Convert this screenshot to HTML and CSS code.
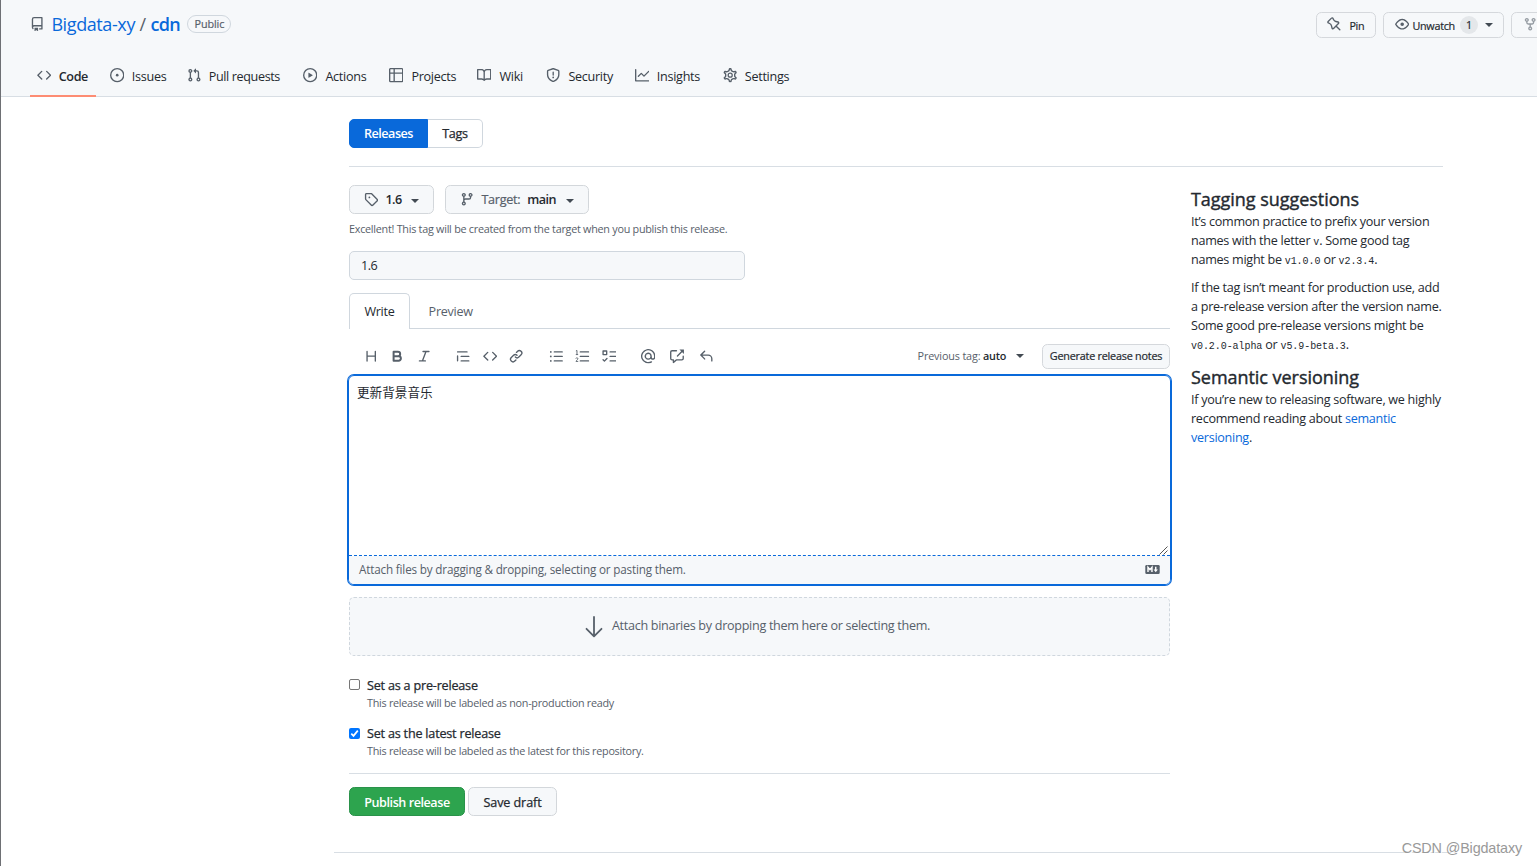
FILE: index.html
```html
<!DOCTYPE html>
<html lang="en">
<head>
    <meta charset="UTF-8">
    <meta name="viewport" content="width=device-width, initial-scale=1.0">
    <title>New release · Bigdata-xy/cdn</title>
    <link rel="stylesheet" href="styles.css">
</head>
<body>
    <svg class="sprite" width="0" height="0">
        <symbol id="repo" viewBox="0 0 16 16"><path fill-rule="evenodd" d="M2 2.5A2.5 2.5 0 014.5 0h8.75a.75.75 0 01.75.75v12.5a.75.75 0 01-.75.75h-2.5a.75.75 0 110-1.5h1.75v-2h-8a1 1 0 00-.714 1.7.75.75 0 01-1.072 1.05A2.495 2.495 0 012 11.5v-9zm10.5-1V9h-8c-.356 0-.694.074-1 .208V2.5a1 1 0 011-1h8zM5 12.25v3.25a.25.25 0 00.4.2l1.45-1.087a.25.25 0 01.3 0L8.6 15.7a.25.25 0 00.4-.2v-3.25a.25.25 0 00-.25-.25h-3.5a.25.25 0 00-.25.25z"/></symbol>
        <symbol id="code" viewBox="0 0 16 16"><path d="M4.72 3.22a.75.75 0 011.06 1.06L2.06 8l3.72 3.72a.75.75 0 11-1.06 1.06L.47 8.53a.75.75 0 010-1.06l4.25-4.25zm6.56 0a.75.75 0 10-1.06 1.06L13.94 8l-3.72 3.72a.75.75 0 101.06 1.06l4.25-4.25a.75.75 0 000-1.06l-4.25-4.25z"/></symbol>
        <symbol id="issue" viewBox="0 0 16 16"><path d="M8 9.5a1.5 1.5 0 100-3 1.5 1.5 0 000 3z"/><path fill-rule="evenodd" d="M8 0a8 8 0 100 16A8 8 0 008 0zM1.5 8a6.5 6.5 0 1113 0 6.5 6.5 0 01-13 0z"/></symbol>
        <symbol id="pull" viewBox="0 0 16 16"><path fill-rule="evenodd" d="M7.177 3.073L9.573.677A.25.25 0 0110 .854v4.792a.25.25 0 01-.427.177L7.177 3.427a.25.25 0 010-.354zM3.75 2.5a.75.75 0 100 1.5.75.75 0 000-1.5zm-2.25.75a2.25 2.25 0 113 2.122v5.256a2.251 2.251 0 11-1.5 0V5.372A2.25 2.25 0 011.5 3.25zM11 2.5h-1V4h1a1 1 0 011 1v5.628a2.251 2.251 0 101.5 0V5A2.5 2.5 0 0011 2.5zm1 10.25a.75.75 0 111.5 0 .75.75 0 01-1.5 0zM3.75 12a.75.75 0 100 1.5.75.75 0 000-1.5z"/></symbol>
        <symbol id="play" viewBox="0 0 16 16"><path fill-rule="evenodd" d="M1.5 8a6.5 6.5 0 1113 0 6.5 6.5 0 01-13 0zM8 0a8 8 0 100 16A8 8 0 008 0zM6.379 5.227A.25.25 0 006 5.442v5.117a.25.25 0 00.379.214l4.264-2.559a.25.25 0 000-.428L6.379 5.227z"/></symbol>
        <symbol id="table" viewBox="0 0 16 16"><path fill-rule="evenodd" d="M0 1.75C0 .784.784 0 1.75 0h12.5C15.216 0 16 .784 16 1.75v12.5A1.75 1.75 0 0114.25 16H1.75A1.75 1.75 0 010 14.25V1.75zM1.5 6.5v7.75c0 .138.112.25.25.25H5v-8H1.5zM5 5H1.5V1.75a.25.25 0 01.25-.25H5V5zm1.5 1.5v8h7.75a.25.25 0 00.25-.25V6.5h-8zm8-1.5h-8V1.5h7.75a.25.25 0 01.25.25V5z"/></symbol>
        <symbol id="book" viewBox="0 0 16 16"><path fill-rule="evenodd" d="M0 1.75A.75.75 0 01.75 1h4.253c1.227 0 2.317.59 3 1.501A3.744 3.744 0 0111.006 1h4.245a.75.75 0 01.75.75v10.5a.75.75 0 01-.75.75h-4.507a2.25 2.25 0 00-1.591.659l-.622.621a.75.75 0 01-1.06 0l-.622-.621A2.25 2.25 0 005.258 13H.75a.75.75 0 01-.75-.75V1.75zm8.755 3a2.25 2.25 0 012.25-2.25H14.5v9h-3.757c-.71 0-1.4.201-1.992.572l.004-7.322zm-1.504 7.324l.004-5.073-.002-2.253A2.25 2.25 0 005.003 2.5H1.5v9h3.757a3.75 3.75 0 011.994.574z"/></symbol>
        <symbol id="shield" viewBox="0 0 16 16"><path fill-rule="evenodd" d="M7.467.133a1.75 1.75 0 011.066 0l5.25 1.68A1.75 1.75 0 0115 3.48V7c0 1.566-.32 3.182-1.303 4.682-.983 1.498-2.585 2.813-5.032 3.855a1.7 1.7 0 01-1.33 0c-2.447-1.042-4.049-2.357-5.032-3.855C1.32 10.182 1 8.566 1 7V3.48a1.75 1.75 0 011.217-1.667l5.25-1.68zm.61 1.429a.25.25 0 00-.153 0l-5.25 1.68a.25.25 0 00-.174.238V7c0 1.358.275 2.666 1.057 3.86.784 1.194 2.121 2.34 4.366 3.297a.2.2 0 00.154 0c2.245-.956 3.582-2.104 4.366-3.298C13.225 9.666 13.5 8.36 13.5 7V3.48a.25.25 0 00-.174-.237l-5.25-1.68zM9 10.5a1 1 0 11-2 0 1 1 0 012 0zm-.25-5.75a.75.75 0 10-1.5 0v3a.75.75 0 001.5 0v-3z"/></symbol>
        <symbol id="graph" viewBox="0 0 16 16"><path d="M1.5 1.75a.75.75 0 00-1.5 0v12.5c0 .414.336.75.75.75h14.5a.75.75 0 000-1.5H1.5V1.75zm14.28 2.53a.75.75 0 00-1.06-1.06L10 7.94 7.53 5.47a.75.75 0 00-1.06 0L3.22 8.72a.75.75 0 001.06 1.06L7 7.06l2.47 2.47a.75.75 0 001.06 0l5.25-5.25z"/></symbol>
        <symbol id="gear" viewBox="0 0 16 16"><g fill="none" stroke="currentColor" stroke-width="1.4"><path transform="translate(-.88 -.88) scale(1.11)" d="M7.429 1.525a6.593 6.593 0 011.142 0c.036.003.108.036.137.146l.289 1.105c.147.56.55.967.997 1.189.174.086.341.183.501.29.417.278.97.423 1.53.27l1.102-.303c.11-.03.175.016.195.046.219.31.41.641.573.989.014.031.022.11-.059.19l-.815.806c-.411.406-.562.957-.53 1.456a4.588 4.588 0 010 .582c-.032.499.119 1.05.53 1.456l.815.806c.08.08.073.159.059.19a6.494 6.494 0 01-.573.99c-.02.029-.086.074-.195.045l-1.103-.303c-.559-.153-1.112-.008-1.529.27-.16.107-.327.204-.5.29-.449.222-.851.628-.998 1.189l-.289 1.105c-.029.11-.101.143-.137.146a6.613 6.613 0 01-1.142 0c-.036-.003-.108-.037-.137-.146l-.289-1.105c-.147-.56-.55-.967-.997-1.189a4.502 4.502 0 01-.501-.29c-.417-.278-.97-.423-1.53-.27l-1.102.303c-.11.03-.175-.016-.195-.046a6.492 6.492 0 01-.573-.989c-.014-.031-.022-.11.059-.19l.815-.806c.411-.406.562-.957.53-1.456a4.587 4.587 0 010-.582c.032-.499-.119-1.05-.53-1.456l-.815-.806c-.08-.08-.073-.159-.059-.19a6.44 6.44 0 01.573-.99c.02-.029.086-.075.195-.045l1.103.303c.559.153 1.112.008 1.529-.27.16-.107.327-.204.5-.29.449-.222.851-.628.998-1.189l.289-1.105c.029-.11.101-.143.137-.146z"/><circle cx="8" cy="8" r="2.25"/></g></symbol>
        <symbol id="pin" viewBox="0 0 16 16"><path fill-rule="evenodd" d="M4.456.734a1.75 1.75 0 012.826.504l.613 1.327a3.081 3.081 0 002.084 1.707l2.454.584c1.332.317 1.8 1.972.832 2.94L11.06 10l3.72 3.72a.75.75 0 11-1.061 1.06L10 11.06l-2.204 2.205c-.968.968-2.623.5-2.94-.832l-.584-2.454a3.081 3.081 0 00-1.707-2.084l-1.327-.613a1.75 1.75 0 01-.504-2.826L4.456.734zM5.92 1.866a.25.25 0 00-.404-.072L1.794 5.516a.25.25 0 00.072.404l1.328.613A4.582 4.582 0 015.73 9.63l.584 2.454a.25.25 0 00.42.12l5.47-5.47a.25.25 0 00-.12-.42L9.63 5.73a4.581 4.581 0 01-3.098-2.537L5.92 1.866z"/></symbol>
        <symbol id="eye" viewBox="0 0 16 16"><path fill-rule="evenodd" d="M1.679 7.932c.412-.621 1.242-1.75 2.366-2.717C5.175 4.242 6.527 3.5 8 3.5c1.473 0 2.824.742 3.955 1.715 1.124.967 1.954 2.096 2.366 2.717a.119.119 0 010 .136c-.412.621-1.242 1.75-2.366 2.717C10.825 11.758 9.473 12.5 8 12.5c-1.473 0-2.824-.742-3.955-1.715C2.92 9.818 2.09 8.69 1.679 8.068a.119.119 0 010-.136zM8 2c-1.981 0-3.67.992-4.933 2.078C1.797 5.169.88 6.423.43 7.1a1.619 1.619 0 000 1.798c.45.678 1.367 1.932 2.637 3.024C4.329 13.008 6.019 14 8 14c1.981 0 3.67-.992 4.933-2.078 1.27-1.091 2.187-2.345 2.637-3.023a1.619 1.619 0 000-1.798c-.45-.678-1.367-1.932-2.637-3.023C11.671 2.992 9.981 2 8 2zm0 8a2 2 0 100-4 2 2 0 000 4z"/></symbol>
        <symbol id="fork" viewBox="0 0 16 16"><path fill-rule="evenodd" d="M5 3.25a.75.75 0 11-1.5 0 .75.75 0 011.5 0zm0 2.122a2.25 2.25 0 10-1.5 0v.878A2.25 2.25 0 005.75 8.5h1.5v2.128a2.251 2.251 0 101.5 0V8.5h1.5a2.25 2.25 0 002.25-2.25v-.878a2.25 2.25 0 10-1.5 0v.878a.75.75 0 01-.75.75h-4.5A.75.75 0 015 6.25v-.878zm3.75 7.378a.75.75 0 11-1.5 0 .75.75 0 011.5 0zm3-8.75a.75.75 0 100-1.5.75.75 0 000 1.5z"/></symbol>
        <symbol id="branch" viewBox="0 0 16 16"><path fill-rule="evenodd" d="M11.75 2.5a.75.75 0 100 1.5.75.75 0 000-1.5zm-2.25.75a2.25 2.25 0 113 2.122V6A2.5 2.5 0 0110 8.5H6a1 1 0 00-1 1v1.128a2.251 2.251 0 11-1.5 0V5.372a2.25 2.25 0 111.5 0v1.836A2.492 2.492 0 016 7h4a1 1 0 001-1v-.628A2.25 2.25 0 019.5 3.25zM4.25 12a.75.75 0 100 1.5.75.75 0 000-1.5zM3.5 3.25a.75.75 0 111.5 0 .75.75 0 01-1.5 0z"/></symbol>
        <symbol id="tag" viewBox="0 0 16 16"><path fill-rule="evenodd" d="M2.5 7.775V2.75a.25.25 0 01.25-.25h5.025a.25.25 0 01.177.073l6.25 6.25a.25.25 0 010 .354l-5.025 5.025a.25.25 0 01-.354 0l-6.25-6.25a.25.25 0 01-.073-.177zm-1.5 0V2.75C1 1.784 1.784 1 2.75 1h5.025c.464 0 .91.184 1.238.513l6.25 6.25a1.75 1.75 0 010 2.474l-5.026 5.026a1.75 1.75 0 01-2.474 0l-6.25-6.25A1.75 1.75 0 011 7.775zM6 5a1 1 0 100 2 1 1 0 000-2z"/></symbol>
        <symbol id="heading" viewBox="0 0 16 16"><path fill="none" stroke="currentColor" stroke-width="1.5" stroke-linecap="round" d="M3.4 2.7v10.6M12.600 2.7v10.6M3.400 8h9.200"/></symbol>
        <symbol id="bold" viewBox="0 0 16 16"><path fill="none" stroke="currentColor" stroke-width="2.2" stroke-linejoin="round" d="M4 3h4.800a2.400 2.400 0 010 5H4zM4 8h5.600a2.500 2.500 0 010 5H4z"/></symbol>
        <symbol id="italic" viewBox="0 0 16 16"><path fill="none" stroke="currentColor" stroke-width="1.5" stroke-linecap="round" d="M6.7 2.75h6.6M2.7 13.25h6.6M10 2.75l-4 10.5"/></symbol>
        <symbol id="quote" viewBox="0 0 16 16"><path fill="none" stroke="currentColor" stroke-width="1.5" stroke-linecap="round" d="M1.75 3.25h10.5M5.75 8.25h8.5M5.75 13.25h8.5M1.75 7.7v5.5"/></symbol>
        <symbol id="link" viewBox="0 0 16 16"><path d="M7.775 3.275a.75.75 0 001.06 1.06l1.25-1.25a2 2 0 112.83 2.83l-2.5 2.5a2 2 0 01-2.83 0 .75.75 0 00-1.06 1.06 3.5 3.5 0 004.95 0l2.5-2.5a3.5 3.5 0 00-4.95-4.95l-1.25 1.25zm-4.69 9.64a2 2 0 010-2.83l2.5-2.5a2 2 0 012.83 0 .75.75 0 001.06-1.06 3.5 3.5 0 00-4.95 0l-2.5 2.5a3.5 3.5 0 004.95 4.95l1.25-1.25a.75.75 0 00-1.06-1.06l-1.25 1.25a2 2 0 01-2.83 0z"/></symbol>
        <symbol id="ul" viewBox="0 0 16 16"><path fill="none" stroke="currentColor" stroke-width="1.5" stroke-linecap="round" d="M5.9 3.25h8.8M5.9 8.25h8.8M5.9 13.25h8.8"/><circle cx="2" cy="3.25" r="1"/><circle cx="2" cy="8.25" r="1"/><circle cx="2" cy="13.25" r="1"/></symbol>
        <symbol id="ol" viewBox="0 0 16 16"><path fill="none" stroke="currentColor" stroke-width="1.5" stroke-linecap="round" d="M5.9 3.25h9.2M5.9 8.25h9.2M5.9 13.25h9.2"/><path fill="none" stroke="currentColor" d="M1 2.2l1.2-.6v4.6M.9 6.2h2.6M.9 10.6c.3-1.2 2.4-1.1 2.3.2 0 1-1.6 1.6-2.1 3h2.5"/></symbol>
        <symbol id="tasks" viewBox="0 0 16 16"><path fill="none" stroke="currentColor" stroke-width="1.5" stroke-linecap="round" stroke-linejoin="round" d="M1.2 2.2h4v4h-4zM9 3.25h6.2M9 8.25h6.2M9 13.25h6.2M1.2 12l1.5 1.5 2.8-3"/></symbol>
        <symbol id="mention" viewBox="0 0 16 16"><path fill-rule="evenodd" d="M4.75 2.37a6.5 6.5 0 006.5 11.26.75.75 0 01.75 1.298 8 8 0 113.994-7.273.754.754 0 01.006.095v1.5a2.75 2.75 0 01-5.072 1.475A4 4 0 1112 8v1.25a1.25 1.25 0 002.5 0V7.867a6.5 6.5 0 00-9.75-5.496V2.37zM10.5 8a2.5 2.5 0 10-5 0 2.5 2.5 0 005 0z"/></symbol>
        <symbol id="xref" viewBox="0 0 16 16"><path fill="none" stroke="currentColor" stroke-width="1.5" stroke-linecap="round" stroke-linejoin="round" d="M7.2 1.9H2.3c-.8 0-1.5.6-1.5 1.4v7.4c0 .8.7 1.4 1.5 1.4h1.5v3L7 12.1h6.2c.8 0 1.5-.6 1.5-1.4V8M8.3 7.7L14 2"/><path d="M10.5.5h4.6c.2 0 .4.2.4.4v4.6z"/></symbol>
        <symbol id="reply" viewBox="0 0 16 16"><path d="M6.78 1.97a.75.75 0 010 1.06L3.81 6h6.44A4.75 4.75 0 0115 10.75v2.5a.75.75 0 01-1.5 0v-2.5a3.25 3.25 0 00-3.25-3.25H3.81l2.97 2.97a.75.75 0 11-1.06 1.06L1.47 7.28a.75.75 0 010-1.06l4.25-4.25a.75.75 0 011.06 0z"/></symbol>
    </svg>

    <header class="header">
        <div class="topbar">
            <svg class="icon"><use href="#repo"/></svg>
            <a class="owner">Bigdata-xy</a>
            <span class="slash">/</span>
            <a class="repo">cdn</a>
            <span class="label">Public</span>
            <div class="actions">
                <button class="btn-sm pin"><svg class="icon"><use href="#pin"/></svg>Pin</button>
                <button class="btn-sm watch"><svg class="icon"><use href="#eye"/></svg>Unwatch<span class="counter">1</span><i class="caret"></i></button>
                <button class="btn-sm fork"><svg class="icon"><use href="#fork"/></svg></button>
            </div>
        </div>
        <nav class="nav">
            <a class="active"><svg class="icon"><use href="#code"/></svg>Code</a>
            <a><svg class="icon"><use href="#issue"/></svg>Issues</a>
            <a><svg class="icon"><use href="#pull"/></svg>Pull requests</a>
            <a><svg class="icon"><use href="#play"/></svg>Actions</a>
            <a><svg class="icon"><use href="#table"/></svg>Projects</a>
            <a><svg class="icon"><use href="#book"/></svg>Wiki</a>
            <a><svg class="icon"><use href="#shield"/></svg>Security</a>
            <a><svg class="icon"><use href="#graph"/></svg>Insights</a>
            <a><svg class="icon"><use href="#gear"/></svg>Settings</a>
        </nav>
    </header>

    <main class="container">
        <div class="subnav">
            <a class="selected">Releases</a><a class="tags">Tags</a>
        </div>
        <div class="columns">
            <div class="form">
                <div class="pickers">
                    <button class="btn tag"><svg class="icon"><use href="#tag"/></svg><b>1.6</b><i class="caret"></i></button>
                    <button class="btn target"><svg class="icon"><use href="#branch"/></svg><span>Target:</span><b>main</b><i class="caret"></i></button>
                </div>
                <p class="note">Excellent! This tag will be created from the target when you publish this release.</p>
                <div class="title-input">1.6</div>
                <div class="tabs">
                    <a class="tab current">Write</a>
                    <a class="tab">Preview</a>
                </div>
                <div class="toolbar">
                    <div class="tools">
                        <svg class="icon"><use href="#heading"/></svg>
                        <svg class="icon"><use href="#bold"/></svg>
                        <svg class="icon"><use href="#italic"/></svg>
                    </div>
                    <div class="tools">
                        <svg class="icon"><use href="#quote"/></svg>
                        <svg class="icon"><use href="#code"/></svg>
                        <svg class="icon"><use href="#link"/></svg>
                    </div>
                    <div class="tools">
                        <svg class="icon"><use href="#ul"/></svg>
                        <svg class="icon"><use href="#ol"/></svg>
                        <svg class="icon"><use href="#tasks"/></svg>
                    </div>
                    <div class="tools wide">
                        <svg class="icon"><use href="#mention"/></svg>
                        <svg class="icon"><use href="#xref"/></svg>
                        <svg class="icon"><use href="#reply"/></svg>
                    </div>
                    <div class="previous">Previous tag: <b>auto</b><i class="caret"></i></div>
                    <button class="btn-sm generate">Generate release notes</button>
                </div>
                <div class="editor">
                    <div class="text">更新背景音乐
                        <svg class="grip" viewBox="0 0 9 9"><path d="M.5 8.5l8-8M4.5 8.5l4-4" fill="none" stroke="#555" stroke-width="1"/></svg>
                    </div>
                    <div class="attach">
                        <span>Attach files by dragging &amp; dropping, selecting or pasting them.</span>
                        <svg class="markdown" viewBox="0 0 16 10"><rect width="16" height="10" rx="1.4" fill="#57606a"/><path d="M3 7.8V2.6l2.2 2.6 2.2-2.6v5.2" fill="none" stroke="#fff" stroke-width="1.6"/><path d="M11.6 2v4" stroke="#fff" stroke-width="1.6"/><path d="M9.2 5h4.8l-2.4 3z" fill="#fff"/></svg>
                    </div>
                </div>
                <div class="binaries">
                    <svg class="arrow" viewBox="0 0 18 22"><path d="M9 1v19M1.5 12.8L9 20.3l7.5-7.5" fill="none" stroke="currentColor" stroke-width="1.8" stroke-linecap="round" stroke-linejoin="round"/></svg>
                    <span>Attach binaries by dropping them here or selecting them.</span>
                </div>
                <div class="option">
                    <span class="check"></span>
                    <div>
                        <p class="name">Set as a pre-release</p>
                        <p class="hint">This release will be labeled as non-production ready</p>
                    </div>
                </div>
                <div class="option">
                    <span class="check on"><svg viewBox="0 0 11 11"><path d="M2.3 5.7l2.2 2.2 4.3-5.3" fill="none" stroke="#fff" stroke-width="1.7"/></svg></span>
                    <div>
                        <p class="name">Set as the latest release</p>
                        <p class="hint">This release will be labeled as the latest for this repository.</p>
                    </div>
                </div>
                <div class="submit">
                    <button class="btn publish">Publish release</button>
                    <button class="btn draft">Save draft</button>
                </div>
            </div>
            <aside class="sidebar">
                <h4>Tagging suggestions</h4>
                <p>It’s common practice to prefix your version<br>names with the letter <code>v</code>. Some good tag<br>names might be <code>v1.0.0</code> or <code>v2.3.4</code>.</p>
                <p>If the tag isn’t meant for production use, add<br>a pre-release version after the version name.<br>Some good pre-release versions might be<br><code>v0.2.0-alpha</code> or <code>v5.9-beta.3</code>.</p>
                <h4>Semantic versioning</h4>
                <p>If you’re new to releasing software, we highly<br>recommend reading about <a>semantic<br>versioning</a>.</p>
            </aside>
        </div>
    </main>
    <footer class="footer"></footer>
    <div class="watermark">CSDN @Bigdataxy</div>
</body>
</html>
```
FILE: styles.css
```css
*{
    box-sizing: border-box;
}
body{
    margin: 0;
    height: 866px;
    overflow: hidden;
    position: relative;
    border-left: 1px solid #6e7074;
    background: #fff;
    color: #24292f;
    font-family: "Open Sans", "Noto Sans CJK SC", sans-serif;
    font-size: 12.6px;
    line-height: 19px;
    letter-spacing: -0.28px;
    white-space: nowrap;
}
p,h4{
    margin: 0;
}
b{
    font-weight: 600;
}
button{
    font: inherit;
    letter-spacing: inherit;
    color: inherit;
    white-space: nowrap;
}
.sprite{
    position: absolute;
}
.icon{
    width: 14.4px;
    height: 14.4px;
    flex: none;
    fill: currentColor;
    color: #57606a;
}
.caret{
    border: 4px solid transparent;
    border-top-color: #424a53;
    border-bottom: 0;
}

/* header */
.header{
    height: 97px;
    background: #f6f8fa;
    border-bottom: 1px solid #d8dee4;
}
.topbar{
    display: flex;
    align-items: center;
    height: 48px;
    padding-left: 29px;
    font-size: 18px;
}
.owner,.repo{
    color: #0969da;
    letter-spacing: -0.4px;
}
.owner{
    margin-left: 7px;
    width: 88px;
}
.slash{
    width: 11px;
    color: #57606a;
}
.repo{
    width: 37px;
    font-weight: 600;
    letter-spacing: -0.7px;
}
.label{
    width: 44px;
    height: 18px;
    border: 1px solid #d0d7de;
    border-radius: 9px;
    color: #57606a;
    font-size: 10.8px;
    line-height: 15px;
    text-align: center;
    letter-spacing: -0.1px;
    -webkit-text-stroke: 0.2px;
}
.actions{
    display: flex;
    gap: 7px;
    margin-left: auto;
    margin-right: -40px;
    padding-top: 2px;
}
.btn-sm{
    display: flex;
    align-items: center;
    height: 26px;
    padding: 0 10px;
    border: 1px solid #d5d8dc;
    border-radius: 5.4px;
    background: #f6f8fa;
    font-size: 10.8px;
    -webkit-text-stroke: 0.2px;
}
.pin{
    width: 60px;
    gap: 8px;
}
.pin .icon,.watch .icon{
    margin-bottom: 2px;
}
.watch{
    width: 121px;
    padding-left: 11px;
}
.watch .icon{
    margin-right: 3px;
}
.counter{
    width: 18px;
    height: 18px;
    margin: 0 7px 0 5px;
    border-radius: 9px;
    background: #e4e7ea;
    line-height: 18px;
    text-align: center;
}
.fork{
    width: 66px;
    padding-left: 11px;
}
.fork .icon{
    opacity: .6;
    margin-bottom: 2px;
}
.nav{
    display: flex;
    height: 49px;
    padding-left: 29px;
    padding-top: 6px;
}
.nav a{
    display: flex;
    align-items: center;
    gap: 7.4px;
    height: 43px;
    padding-left: 7px;
    padding-top: 2px;
}
.nav .icon{
    margin-bottom: 2px;
}
.nav .active{
    width: 66px;
    margin-right: 7px;
    border-bottom: 2px solid #fd8c73;
    padding-top: 4px;
    font-weight: 600;
    letter-spacing: -0.4px;
}
.nav a:nth-child(2){ width: 78px; }
.nav a:nth-child(3){ width: 115px; padding-left: 6px; letter-spacing: -0.38px; }
.nav a:nth-child(4){ width: 86px; gap: 8px; }
.nav a:nth-child(5){ width: 88px; gap: 8px; }
.nav a:nth-child(6){ width: 69px; gap: 8px; }
.nav a:nth-child(7){ width: 89px; gap: 8px; }
.nav a:nth-child(8){ width: 88px; }

/* releases page */
.container{
    width: 1094px;
    margin-left: 348px;
    padding-top: 22px;
}
.subnav{
    display: flex;
    height: 48px;
    border-bottom: 1px solid #d8dee4;
    line-height: 27px;
    text-align: center;
}
.subnav a{
    height: 29px;
}
.selected{
    width: 79px;
    border: 1px solid #0969da;
    border-radius: 5px 0 0 5px;
    background: #0969da;
    color: #fff;
    font-weight: 600;
    letter-spacing: -0.5px;
}
.tags{
    width: 55px;
    border: 1px solid #d0d7de;
    border-left: 0;
    border-radius: 0 5px 5px 0;
    -webkit-text-stroke: 0.25px;
}
.columns{
    display: flex;
    justify-content: space-between;
}
.form{
    width: 821px;
    padding-top: 18px;
}
.pickers{
    display: flex;
    gap: 11px;
}
.btn{
    display: flex;
    align-items: center;
    height: 29px;
    padding: 0 15px;
    border: 1px solid #d3d7db;
    border-radius: 5.4px;
    background: #f6f8fa;
}
.btn b{
    letter-spacing: -0.5px;
}
.tag{
    width: 85px;
    padding-left: 14px;
}
.tag .icon{
    margin-right: 7px;
}
.target{
    width: 144px;
    padding-left: 14px;
}
.target .icon{
    margin-right: 7px;
}
.target span{
    color: #57606a;
    margin-right: 7px;
    -webkit-text-stroke: 0.2px;
}
.btn .caret{
    margin-left: auto;
    margin-right: -1px;
    margin-top: 2px;
}
.note{
    padding-top: 6px;
    font-size: 10.8px;
    color: #57606a;
    line-height: 18px;
    letter-spacing: -0.26px;
}
.title-input{
    width: 396px;
    height: 29px;
    margin-top: 13px;
    padding-left: 11px;
    border: 1px solid #d0d7de;
    border-radius: 5px;
    background: #f6f8fa;
    line-height: 27px;
    letter-spacing: -0.5px;
}
.tabs{
    display: flex;
    height: 36px;
    margin-top: 13px;
    border-bottom: 1px solid #d0d7de;
    color: #57606a;
}
.tab{
    padding: 9px 18.6px;
}
.current{
    width: 61px;
    height: 36px;
    padding: 8px 14.4px;
    border: 1px solid #d0d7de;
    border-bottom: 0;
    border-radius: 5px 5px 0 0;
    background: #fff;
    color: #24292f;
}
.toolbar{
    display: flex;
    align-items: center;
    height: 46px;
    padding-left: 15px;
    padding-top: 9px;
}
.tools{
    display: flex;
    gap: 12px;
    margin-right: 25.2px;
}
.wide{
    gap: 14.6px;
}
.previous{
    display: flex;
    align-items: center;
    margin-left: auto;
    padding-bottom: 2px;
    font-size: 10.8px;
    color: #57606a;
    white-space: pre;
    letter-spacing: -0.15px;
}
.previous b{
    color: #24292f;
    letter-spacing: -0.25px;
}
.previous .caret{
    margin: 0 18px 0 10px;
}
.generate{
    width: 128px;
    height: 25px;
    padding: 0 0 2px;
    justify-content: center;
    letter-spacing: -0.22px;
}
.editor{
    margin: 0 -1px;
    height: 210px;
    border: 1px solid #0969da;
    border-radius: 6px;
    box-shadow: 0 0 0 1px #0969da;
    overflow: hidden;
}
.text{
    position: relative;
    height: 180px;
    padding: 7px 8px;
    border-bottom: 1px dashed #0969da;
    letter-spacing: 0;
}
.grip{
    position: absolute;
    right: 2px;
    bottom: 0;
    width: 9px;
    height: 9px;
}
.attach{
    display: flex;
    align-items: center;
    justify-content: space-between;
    height: 28px;
    padding: 0 10px 1px;
    background: #f6f8fa;
    color: #57606a;
    font-size: 11.7px;
    letter-spacing: -0.17px;
}
.markdown{
    width: 15px;
    height: 9px;
}
.binaries{
    display: flex;
    align-items: center;
    justify-content: center;
    gap: 9px;
    height: 59px;
    margin-top: 12px;
    margin-bottom: 20px;
    padding: 0 4px 2px 0;
    border: 1px dashed #d0d7de;
    border-radius: 5px;
    background: #f6f8fa;
    color: #57606a;
    letter-spacing: -0.3px;
}
.arrow{
    width: 18px;
    height: 22px;
    margin-top: 3px;
}
.option{
    display: flex;
    height: 48px;
    gap: 7px;
}
.check{
    width: 11px;
    height: 11px;
    margin-top: 3px;
    border: 1px solid #767676;
    border-radius: 2px;
}
.on{
    margin-top: 4px;
    border: 0;
    background: #0075ff;
}
.on svg{
    display: block;
}
.name{
    letter-spacing: -0.2px;
    -webkit-text-stroke: 0.25px;
}
.hint{
    font-size: 10.8px;
    line-height: 16px;
    color: #57606a;
    letter-spacing: -0.27px;
}
.submit{
    display: flex;
    gap: 3px;
    margin-top: 1px;
    padding-top: 13px;
    border-top: 1px solid #d8dee4;
}
.publish{
    width: 116px;
    padding: 2px 0 0;
    justify-content: center;
    border-color: #2a924a;
    background: #2da44e;
    color: #fff;
    font-weight: 600;
    letter-spacing: -0.45px;
}
.draft{
    width: 89px;
    padding: 2px 0 0;
    justify-content: center;
    letter-spacing: -0.1px;
    -webkit-text-stroke: 0.25px;
}
.sidebar{
    width: 252px;
    padding-top: 19px;
}
.sidebar h4{
    font-size: 18px;
    line-height: 26px;
    font-weight: 500;
    letter-spacing: -0.04px;
    -webkit-text-stroke: 0.4px;
}
.sidebar p{
    margin-bottom: 9px;
}
.sidebar p + h4{
    padding-top: 1px;
}
.sidebar code{
    font-family: "Liberation Mono", monospace;
    font-size: 10px;
    line-height: 1;
    letter-spacing: -0.06px;
}
.sidebar a{
    color: #0969da;
}
.footer{
    width: 1124px;
    margin-left: 333px;
    margin-top: 36px;
    border-top: 1px solid #d8dee4;
}
.watermark{
    position: absolute;
    right: 15px;
    bottom: 8px;
    color: #999;
    font-family: "Liberation Sans", Arial, sans-serif;
    font-size: 14.4px;
    letter-spacing: -0.15px;
    text-shadow: 1px 1px 0 #fff;
}
```
